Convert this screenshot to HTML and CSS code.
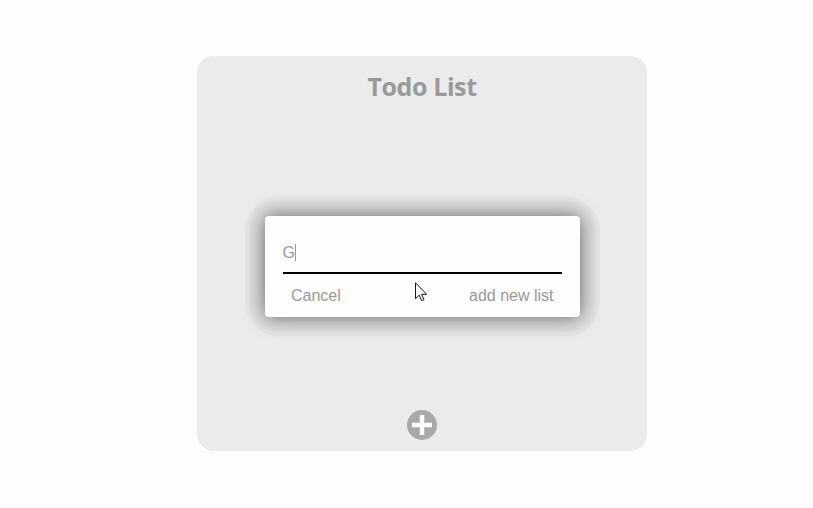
FILE: index.html
```html
<!DOCTYPE html>
<html lang="en">
<head>
<meta charset="utf-8">
<title>Todo List</title>
<link rel="stylesheet" href="styles.css">
</head>
<body>
<main class="card">
  <h1 class="title">Todo List</h1>
  <section class="dialog">
    <div class="field"><span>G</span><span class="caret"></span></div>
    <div class="actions">
      <button class="action">Cancel</button>
      <button class="action">add new list</button>
    </div>
  </section>
  <button class="add" aria-label="Add">
    <svg width="30" height="30" viewBox="0 0 30 30"><circle cx="15" cy="15" r="15" fill="#a9a9a9"/><path d="M12.8 5h4.4v7.8H25v4.4h-7.8V25h-4.4v-7.8H5v-4.4h7.8z" fill="#fdfdfd"/></svg>
  </button>
</main>
<svg class="pointer" width="13" height="20" viewBox="0 0 13 20"><path d="M.5.7v16l3.7-3.5 2.4 5.4 2.4-1-2.4-5.3h5z" fill="#fff" stroke="#15151f" stroke-width="1"/></svg>
</body>
</html>
```
FILE: styles.css
```css
* {
  box-sizing: border-box;
}

body {
  margin: 0;
  height: 508px;
  padding: 56px 0 0 197px;
  background: #fdfdfd;
  overflow: hidden;
  font-family: "Liberation Sans", Arial, sans-serif;
  color: #999;
}

.card {
  position: relative;
  z-index: 0;
  display: flex;
  flex-direction: column;
  align-items: center;
  width: 450px;
  height: 395px;
  padding: 12px 0 11px;
  border-radius: 17px;
  background: #ebebeb;
}

.title {
  margin: 0;
  font: bold 25px/36px "Open Sans", "Noto Sans", sans-serif;
  letter-spacing: -0.4px;
}

.dialog {
  position: relative;
  width: 315px;
  height: 101px;
  margin-top: 112px;
  padding: 20px 18px 0;
  border-radius: 4px;
  background: #fdfdfd;
  box-shadow: 0 0 20px rgba(0, 0, 0, 0.58);
}

/* Stepped outer halo */
.dialog::before,
.dialog::after {
  content: "";
  position: absolute;
  z-index: -1;
}

.dialog::before {
  inset: -20px;
  border-radius: 36px;
  background: #e5e5e5;
}

.dialog::after {
  inset: -15px;
  border-radius: 27px;
  background: #e0e0e0;
}

.field {
  display: flex;
  align-items: center;
  height: 38px;
  padding-bottom: 3px;
  border-bottom: 2px solid #000;
  font-size: 16px;
}

.caret {
  width: 1px;
  height: 17px;
  background: #999;
}

.actions {
  display: flex;
  justify-content: space-between;
  padding: 12px 8px 0 8.5px;
}

.action,
.add {
  padding: 0;
  border: 0;
  background: none;
}

.action {
  font: 16px/19px "Liberation Sans", Arial, sans-serif;
  color: #999;
}

.add {
  width: 30px;
  height: 30px;
  margin-top: auto;
}

.add svg {
  display: block;
}

.pointer {
  position: absolute;
  z-index: 1;
  left: 415px;
  top: 282px;
}
```
